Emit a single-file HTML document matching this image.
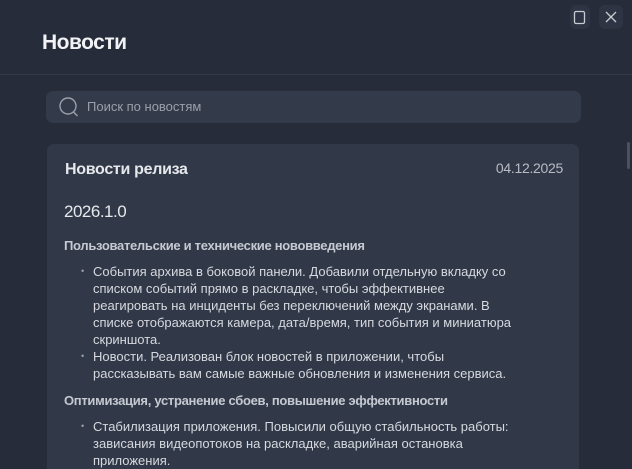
<!DOCTYPE html>
<html><head><meta charset="utf-8"><style>
*{margin:0;padding:0;box-sizing:border-box}
html,body{width:632px;height:469px;overflow:hidden}
body{background:#262c3a;font-family:"Liberation Sans",sans-serif;color:#e6e8ec;position:relative}
.btn{position:absolute;top:5px;width:20px;height:24px;border-radius:6px;background:#2e3443}
h1{position:absolute;left:42px;top:31px;font-size:21px;font-weight:bold;letter-spacing:-0.5px;color:#f2f3f5}
.div{position:absolute;left:0;top:74px;width:632px;height:1px;background:#323949}
.search{position:absolute;left:46px;top:91px;width:535px;height:32px;border-radius:7px;background:#333a49}
.search span{position:absolute;left:41px;top:8px;font-size:13px;color:#9aa0ab}
.card{position:absolute;left:47px;top:144px;width:532px;height:340px;border-radius:7px;background:#313847}
.sb{position:absolute;left:627px;top:142px;width:3px;height:27px;background:#4a5160;border-radius:2px}
.ct{position:absolute;left:18px;top:17px;font-size:16px;font-weight:bold;letter-spacing:-0.3px}
.date{position:absolute;right:16px;top:16px;font-size:14px;color:#b8bcc5;letter-spacing:-0.3px}
.ver{position:absolute;left:17px;top:58px;font-size:17px;letter-spacing:-0.5px}
.h{position:absolute;left:17px;font-size:13px;font-weight:bold;color:#c5c9d1;letter-spacing:-0.3px}
ul{position:absolute;left:34px;width:432px;list-style:none;font-size:13px;line-height:17px;color:#d6d9df}
li{position:relative;padding-left:12px}
li:before{content:"•";position:absolute;left:0;color:#9aa0ab;font-size:9px}
</style></head><body>
<div class="btn" style="left:570px"><svg width="20" height="24"><rect x="4.5" y="6.5" width="10" height="12" rx="1.5" fill="none" stroke="#c9ccd3" stroke-width="1.3"/></svg></div>
<div class="btn" style="left:599px;width:24px"><svg width="24" height="24"><path d="M7 7l10 10M17 7L7 17" stroke="#c9ccd3" stroke-width="1.3"/></svg></div>
<h1>Новости</h1>
<div class="div"></div>
<div class="search"><svg width="30" height="32" style="position:absolute;left:8px;top:0"><circle cx="14" cy="15" r="8" fill="none" stroke="#9aa0ab" stroke-width="1.4"/><path d="M19.5 21l4 4" stroke="#9aa0ab" stroke-width="1.4"/></svg><span>Поиск по новостям</span></div>
<div class="card">
<div class="ct">Новости релиза</div>
<div class="date">04.12.2025</div>
<div class="ver">2026.1.0</div>
<div class="h" style="top:94px">Пользовательские и технические нововведения</div>
<ul style="top:119px">
<li>События архива в боковой панели. Добавили отдельную вкладку со списком событий прямо в раскладке, чтобы эффективнее реагировать на инциденты без переключений между экранами. В списке отображаются камера, дата/время, тип события и миниатюра скриншота.</li>
<li>Новости. Реализован блок новостей в приложении, чтобы рассказывать вам самые важные обновления и изменения сервиса.</li>
</ul>
<div class="h" style="top:249px">Оптимизация, устранение сбоев, повышение эффективности</div>
<ul style="top:274px">
<li>Стабилизация приложения. Повысили общую стабильность работы: зависания видеопотоков на раскладке, аварийная остановка приложения.</li>
</ul>
</div>
<div class="sb"></div>
</body></html>
